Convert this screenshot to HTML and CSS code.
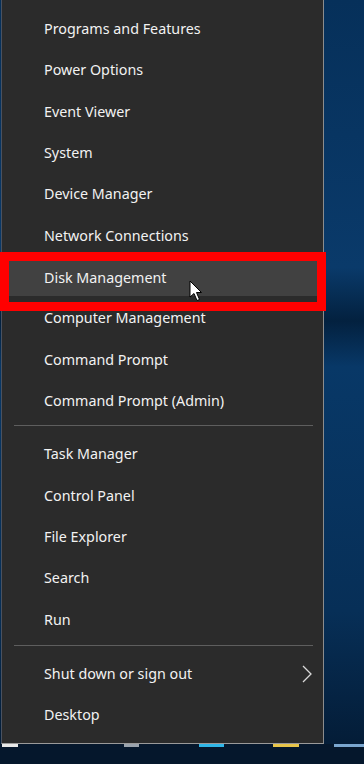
FILE: index.html
```html
<!DOCTYPE html>
<html lang="en">
<head>
    <meta charset="UTF-8">
    <title>Quick Link Menu</title>
    <link rel="stylesheet" href="styles.css">
</head>
<body>
    <div class="screen">
        <!-- Win+X menu -->
        <div class="menu">
            <ul class="group">
                <li class="item">Programs and Features</li>
                <li class="item">Power Options</li>
                <li class="item">Event Viewer</li>
                <li class="item">System</li>
                <li class="item">Device Manager</li>
                <li class="item">Network Connections</li>
                <li class="item hover">Disk Management</li>
                <li class="item">Computer Management</li>
                <li class="item">Command Prompt</li>
                <li class="item">Command Prompt (Admin)</li>
            </ul>
            <div class="separator"></div>
            <ul class="group">
                <li class="item">Task Manager</li>
                <li class="item">Control Panel</li>
                <li class="item">File Explorer</li>
                <li class="item">Search</li>
                <li class="item">Run</li>
            </ul>
            <div class="separator second"></div>
            <ul class="group">
                <li class="item submenu">Shut down or sign out
                    <svg class="chevron" width="10" height="18" viewBox="0 0 10 18"><path d="M1 1 L9 9 L1 17" fill="none" stroke="#d8d8d8" stroke-width="1.3"/></svg>
                </li>
                <li class="item">Desktop</li>
            </ul>
        </div>

        <!-- taskbar strip under the menu -->
        <div class="taskbar">
            <span class="tb-bit white"></span>
            <span class="tb-bit grey"></span>
            <span class="tb-bit cyan"></span>
            <span class="tb-bit yellow"></span>
            <span class="tb-bit blue"></span>
        </div>

        <!-- annotation + cursor -->
        <div class="mark"></div>
        <svg class="cursor" width="14" height="22" viewBox="0 0 14 22">
            <path d="M1 1 L1 17 L5 13.5 L8 20.5 L10.5 19.5 L7.5 12.5 L12.5 12.5 Z" fill="#fff" stroke="#000" stroke-width="1"/>
        </svg>
    </div>
</body>
</html>
```

FILE: styles.css
```css
/* page */
body {
    margin: 0;
    background-color: #062c52;
    font-family: 'Noto Sans', 'Open Sans', sans-serif;
}

.screen {
    position: relative;
    width: 364px;
    height: 764px;
    overflow: hidden;
    background: linear-gradient(180deg, #06305a 0%, #0a3a6a 35%, #03213f 42%, #083867 48%, #072f57 80%, #041d38 97%);
}

/* menu panel */
.menu {
    width: 323px;
    height: 744px;
    box-sizing: border-box;
    margin-left: 1px;
    padding-top: 8px;
    background-color: #2b2b2b;
    border-left: 1px solid #4a5260;
    border-right: 1px solid #8c8c8c;
    border-bottom: 1px solid #9a9a9a;
}

.group {
    list-style: none;
    margin: 0;
    padding: 0;
}

.item {
    height: 41.33px;
    display: flex;
    align-items: center;
    padding-left: 42px;
    color: #f2f2f2;
    font-size: 14.3px;
}

.item.hover {
    background-color: #414141;
    margin-left: 6px;
    margin-right: 5px;
    padding-left: 36px;
    height: 36px;
    margin-top: 4px;
    margin-bottom: 1.33px;
}

.item.submenu {
    justify-content: space-between;
    padding-right: 11px;
}

.chevron {
    display: block;
}

.separator {
    height: 1px;
    background-color: #5e5e5e;
    margin: 4px 10px 7px 12px;
}

.separator.second {
    margin-top: 5px;
    margin-bottom: 7px;
}

/* taskbar */
.taskbar {
    height: 20px;
    background-color: #05172c;
    display: flex;
    align-items: flex-start;
}

.tb-bit {
    height: 3px;
    display: block;
}

.tb-bit.white { width: 16px; margin-left: 2px; background: #e8e8e8; }
.tb-bit.grey { width: 15px; margin-left: 106px; background: #9aa3ad; }
.tb-bit.cyan { width: 25px; margin-left: 60px; background: #2fb6e8; }
.tb-bit.yellow { width: 27px; margin-left: 49px; background: #e8c54a; }
.tb-bit.blue { width: 30px; margin-left: 35px; background: #7aa6cf; }

/* red annotation box */
.mark {
    position: absolute;
    left: 0;
    top: 252px;
    width: 308px;
    height: 41px;
    border: 9px solid #ff0000;
}

.cursor {
    position: absolute;
    left: 189px;
    top: 280px;
}
```
